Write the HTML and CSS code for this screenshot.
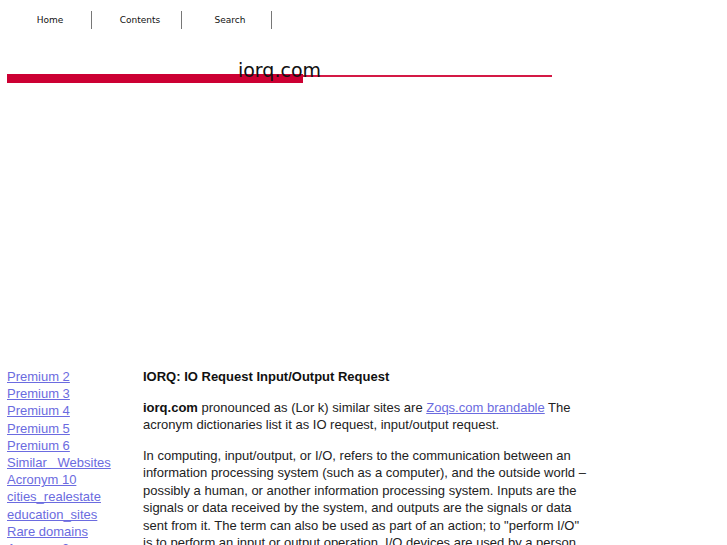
FILE: index.html
```html
<!DOCTYPE html>
<html>
<head>
<meta charset="utf-8">
<title>iorq.com</title>
<link rel="stylesheet" href="styles.css">
</head>
<body>
<nav class="topnav">
  <a class="navitem" href="#">Home</a>
  <a class="navitem" href="#">Contents</a>
  <a class="navitem" href="#">Search</a>
</nav>
<header class="masthead">
  <div class="title">iorq.com</div>
  <div class="rule">
    <div class="rule-thick"></div>
    <div class="rule-thin"></div>
  </div>
</header>
<div class="adspace"></div>
<div class="layout">
  <ul class="sidelinks">
    <li><a href="#">Premium 2</a></li>
    <li><a href="#">Premium 3</a></li>
    <li><a href="#">Premium 4</a></li>
    <li><a href="#">Premium 5</a></li>
    <li><a href="#">Premium 6</a></li>
    <li><a href="#">Similar&nbsp;&nbsp; Websites</a></li>
    <li><a href="#">Acronym 10</a></li>
    <li><a href="#">cities_realestate</a></li>
    <li><a href="#">education_sites</a></li>
    <li><a href="#">Rare domains</a></li>
    <li><a href="#">Acronym 2</a></li>
  </ul>
  <main class="content">
    <p class="heading">IORQ: IO Request Input/Output Request</p>
    <p><b>iorq.com</b> pronounced as (Lor k) similar sites are <a href="#">Zoqs.com brandable</a> The acronym dictionaries list it as IO request, input/output request.</p>
    <p>In computing, input/output, or I/O, refers to the communication between an information processing system (such as a computer), and the outside world – possibly a human, or another information processing system. Inputs are the signals or data received by the system, and outputs are the signals or data sent from it. The term can also be used as part of an action; to "perform I/O" is to perform an input or output operation. I/O devices are used by a person (or other system) to communicate with a computer.</p>
  </main>
</div>
</body>
</html>
```
FILE: styles.css
```css
html, body {
  margin: 0;
  padding: 0;
  background: #ffffff;
}
body {
  font-family: "Liberation Sans", Arial, sans-serif;
  color: #222;
}
.topnav {
  display: flex;
  margin: 11px 0 0 2px;
}
.navitem {
  box-sizing: border-box;
  width: 90px;
  height: 18px;
  padding-left: 7px;
  border-right: 1px solid #777;
  text-align: center;
  font-family: "DejaVu Sans", Verdana, sans-serif;
  font-size: 9px;
  line-height: 18px;
  color: #111;
  text-decoration: none;
}
.masthead {
  display: grid;
  width: 545px;
  margin: 30px 0 0 7px;
}
.title, .rule {
  grid-area: 1 / 1;
}
.title {
  position: relative;
  z-index: 1;
  text-align: center;
  font-family: "DejaVu Sans", Verdana, sans-serif;
  font-size: 19px;
  line-height: 22px;
  color: #111;
}
.rule {
  display: flex;
  align-items: flex-start;
  margin-top: 15px;
}
.rule-thick {
  width: 296px;
  height: 9px;
  background: #cc0033;
}
.rule-thin {
  flex: 1;
  height: 2px;
  margin-top: 1px;
  background: #d41945;
}
.adspace {
  height: 285px;
}
.layout {
  display: grid;
  grid-template-columns: 136px 445px;
  margin-left: 7px;
  font-size: 13px;
}
.sidelinks {
  list-style: none;
  margin: 0;
  padding: 0;
  line-height: 17.2px;
}
.sidelinks a, .content a {
  color: #6b6be0;
  text-decoration: underline;
}
.content {
  line-height: 17.5px;
}
.content p {
  margin: 0 0 13px;
}
.content .heading {
  font-weight: bold;
  color: #111;
}
.content b {
  color: #111;
}
```
